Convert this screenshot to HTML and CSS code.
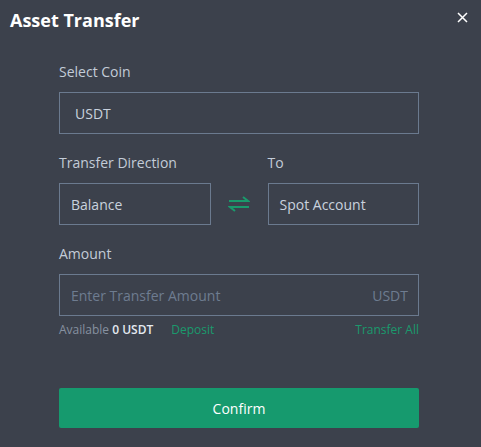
FILE: index.html
```html
<!DOCTYPE html>
<html lang="en">
<head>
    <meta charset="UTF-8">
    <meta name="viewport" content="width=device-width, initial-scale=1.0">
    <title>Asset Transfer</title>
    <link rel="stylesheet" href="styles.css">
</head>
<body>
    <div class="dialog">
        <header class="dialog-head">
            <h1>Asset Transfer</h1>
            <button class="close" aria-label="Close">
                <svg width="11" height="11" viewBox="0 0 11 11">
                    <path d="M1 1L10 10M10 1L1 10" stroke="#ffffff" stroke-width="1.5" fill="none"/>
                </svg>
            </button>
        </header>

        <form class="transfer-form">
            <div class="field">
                <label>Select Coin</label>
                <div class="box coin">USDT</div>
            </div>

            <div class="field">
                <div class="direction">
                    <div class="side">
                        <label>Transfer Direction</label>
                        <div class="box">Balance</div>
                    </div>
                    <div class="swap">
                        <svg width="22" height="16" viewBox="0 0 22 16">
                            <path d="M1 5H20L15 1M21 11H2L7 15" stroke="#1a9a6c" stroke-width="2" fill="none"/>
                        </svg>
                    </div>
                    <div class="side">
                        <label>To</label>
                        <div class="box">Spot Account</div>
                    </div>
                </div>
            </div>

            <div class="field">
                <label>Amount</label>
                <div class="box amount">
                    <span class="placeholder">Enter Transfer Amount</span>
                    <span class="unit">USDT</span>
                </div>
                <div class="balance-row">
                    <span>Available <strong>0 USDT</strong><a href="#" class="link deposit">Deposit</a></span>
                    <a href="#" class="link">Transfer All</a>
                </div>
            </div>

            <button type="submit" class="confirm">Confirm</button>
        </form>
    </div>
</body>
</html>
```

FILE: styles.css
```css
/* General Styles */
body {
    margin: 0;
    font-family: 'Open Sans', 'Noto Sans', sans-serif;
    background-color: #3c414c;
    color: #c3ccd8;
}

/* Header */
.dialog-head {
    display: flex;
    align-items: flex-start;
    justify-content: space-between;
    padding: 7px 13px 0 10px;
    height: 53px;
    box-sizing: border-box;
}
.dialog-head h1 {
    margin: 0;
    font-size: 18px;
    font-weight: 700;
    line-height: 26px;
    color: #ffffff;
}
.close {
    background: none;
    border: none;
    padding: 0;
    margin-top: 5px;
    cursor: pointer;
    line-height: 0;
}

/* Form */
.transfer-form {
    padding: 9px 62px 0 59px;
}
.field {
    margin-bottom: 19px;
}
.field label {
    display: block;
    font-size: 14px;
    line-height: 20px;
    margin-bottom: 10px;
}
.box {
    height: 42px;
    box-sizing: border-box;
    border: 1px solid #6b7a8f;
    padding: 0 11px;
    display: flex;
    align-items: center;
    font-size: 14px;
    color: #c9d2de;
}
.box.coin {
    padding-left: 15px;
}

/* Direction */
.direction {
    display: flex;
    align-items: flex-end;
}
.side {
    flex: 1;
}
.swap {
    width: 57px;
    height: 42px;
    display: flex;
    align-items: center;
    justify-content: center;
}

/* Amount */
.box.amount {
    justify-content: space-between;
    padding-right: 10px;
}
.placeholder,
.unit {
    color: #6e7c90;
}
.balance-row {
    display: flex;
    justify-content: space-between;
    font-size: 12px;
    line-height: 18px;
    margin-top: 5px;
    color: #8791a0;
}
.balance-row strong {
    color: #e4e9f0;
    font-weight: 600;
}
.link {
    color: #1a9a6c;
    text-decoration: none;
}
.deposit {
    margin-left: 18px;
}

/* Button */
.confirm {
    display: block;
    width: 100%;
    height: 40px;
    margin-top: 49px;
    background-color: #169a6e;
    color: #ffffff;
    border: none;
    border-radius: 2px;
    font-family: inherit;
    font-size: 14px;
    cursor: pointer;
}
```
